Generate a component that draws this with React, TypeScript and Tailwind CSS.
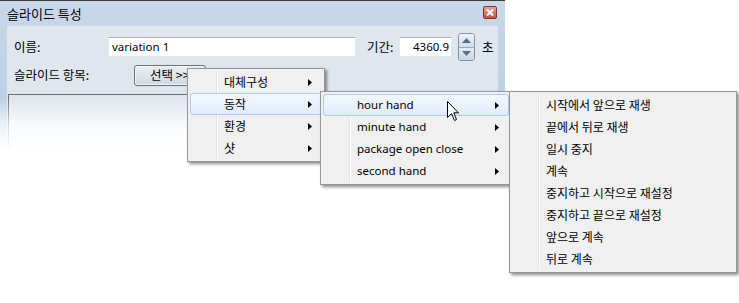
import React from 'react';

const ko = { fontFamily: '"Noto Sans CJK KR", "Noto Sans", sans-serif' };
const lat = { fontFamily: '"Noto Sans", "Noto Sans CJK KR", sans-serif' };

type Item = { label: string; sub?: boolean; active?: boolean; latin?: boolean };

function Arrow() {
  return (
    <svg width="4" height="7" viewBox="0 0 4 7" className="absolute right-[9px] top-[7px]">
      <path d="M0 0 L4 3.5 L0 7 Z" fill="#000" />
    </svg>
  );
}

function Menu({ items, className }: { items: Item[]; className: string }) {
  return (
    <div
      className={`absolute border border-[#979797] bg-[#f0f0f0] py-[2px] shadow-[2px_2px_3px_rgba(0,0,0,0.45)] ${className}`}
    >
      {/* icon column separator */}
      <div className="absolute left-[28px] top-[2px] bottom-[2px] flex">
        <div className="h-full w-px bg-[#e2e3e3]" />
        <div className="h-full w-px bg-white" />
      </div>
      {items.map((it) => (
        <div
          key={it.label}
          className={`relative mx-[2px] flex h-[22px] items-center rounded-[3px] border pl-[33px] ${
            it.active
              ? 'border-[#a8cdf3] bg-gradient-to-b from-[#f3f8fd] to-[#e1ecfa]'
              : 'border-transparent'
          }`}
        >
          <span
            className={`${it.latin ? 'text-[11.5px]' : 'text-[12px]'} leading-none text-black whitespace-nowrap`}
            style={it.latin ? lat : ko}
          >
            {it.label}
          </span>
          {it.sub && <Arrow />}
        </div>
      ))}
    </div>
  );
}

export default function App() {
  const menu1: Item[] = [
    { label: '대체구성', sub: true },
    { label: '동작', sub: true, active: true },
    { label: '환경', sub: true },
    { label: '샷', sub: true },
  ];
  const menu2: Item[] = [
    { label: 'hour hand', sub: true, active: true, latin: true },
    { label: 'minute hand', sub: true, latin: true },
    { label: 'package open close', sub: true, latin: true },
    { label: 'second hand', sub: true, latin: true },
  ];
  const menu3: Item[] = [
    { label: '시작에서 앞으로 재생' },
    { label: '끝에서 뒤로 재생' },
    { label: '일시 중지' },
    { label: '계속' },
    { label: '중지하고 시작으로 재설정' },
    { label: '중지하고 끝으로 재설정' },
    { label: '앞으로 계속' },
    { label: '뒤로 계속' },
  ];

  return (
    <div className="relative h-[303px] w-[739px] overflow-hidden bg-white">
      {/* dialog window */}
      <div className="relative h-[150px] w-[505px] overflow-hidden border-t border-[#3a3a3a] bg-gradient-to-b from-[#c9d8e8] to-[#b9cde3]">
        <div className="flex h-[25px] items-center justify-between pl-[7px] pr-[8px]">
          <span className="text-[13px] leading-none text-black" style={ko}>
            슬라이드 특성
          </span>
          <div className="mt-[-2px] flex h-[13px] w-[14px] items-center justify-center rounded-[2px] border border-[#7e3327] bg-gradient-to-b from-[#e8a597] to-[#c4513f]">
            <svg width="8" height="7" viewBox="0 0 8 7">
              <path d="M1 0.5 L7 6.5 M7 0.5 L1 6.5" stroke="#fff" strokeWidth="2" />
            </svg>
          </div>
        </div>

        <div className="mx-[7px] h-[140px] bg-[#dfe6ee] pt-[7px]">
          <div className="flex h-[28px] items-center pl-[7px]">
            <span className="w-[94px] text-[12.5px] leading-none" style={ko}>
              이름:
            </span>
            <div className="flex h-[20px] w-[248px] items-center border border-[#e3e9ef] border-t-[#abadb3] bg-white pl-[3px]">
              <span className="text-[11.5px] leading-none" style={lat}>
                variation 1
              </span>
            </div>
            <span className="ml-[11px] w-[32px] text-[12.5px] leading-none" style={ko}>
              기간:
            </span>
            <div className="flex h-[20px] w-[53px] items-center justify-end border border-[#e3e9ef] border-t-[#abadb3] bg-white pr-[2px]">
              <span className="text-[11.5px] leading-none" style={lat}>
                4360.9
              </span>
            </div>
            <div className="ml-[6px] flex h-[28px] w-[17px] flex-col overflow-hidden rounded-[3px] border border-[#8294a8]">
              <div className="flex flex-1 items-center justify-center border-b border-[#9aaabb] bg-gradient-to-b from-[#eef3f8] to-[#d3dde8]">
                <svg width="9" height="5" viewBox="0 0 9 5">
                  <path d="M0 5 L4.5 0 L9 5 Z" fill="#56708c" />
                </svg>
              </div>
              <div className="flex flex-1 items-center justify-center bg-gradient-to-b from-[#e6edf4] to-[#c9d5e2]">
                <svg width="9" height="5" viewBox="0 0 9 5">
                  <path d="M0 0 L4.5 5 L9 0 Z" fill="#56708c" />
                </svg>
              </div>
            </div>
            <span className="ml-[7px] text-[12.5px] leading-none" style={ko}>
              초
            </span>
          </div>

          <div className="mt-[4px] flex h-[21px] items-center pl-[7px]">
            <span className="w-[120px] text-[12.5px] leading-none" style={ko}>
              슬라이드 항목:
            </span>
            <div className="flex h-[21px] w-[72px] items-center rounded-[3px] border border-[#707070] bg-gradient-to-b from-[#e9eef4] to-[#cfd9e4] pl-[15px] shadow-[inset_0_0_0_1px_#f4f7fa]">
              <span className="text-[12.5px] leading-none" style={ko}>
                선택 &gt;&gt;
              </span>
            </div>
          </div>

          <div className="ml-[1px] mt-[8px] h-[60px] w-[484px] border-l border-t border-[#707070] bg-gradient-to-b from-[#dde5ed] to-[#eef2f6]" />
        </div>

        <div className="absolute bottom-0 left-0 h-[52px] w-full bg-gradient-to-b from-white/0 via-white/70 to-white" />
      </div>

      <Menu items={menu1} className="left-[187px] top-[68px] w-[138px]" />
      <Menu items={menu2} className="left-[320px] top-[91px] w-[192px]" />
      <Menu items={menu3} className="left-[509px] top-[91px] w-[228px]" />

      {/* mouse pointer */}
      <svg width="13" height="21" viewBox="0 0 13 21" className="absolute left-[447px] top-[101px]">
        <path
          d="M0.5 0.5 L0.5 16.5 L4.5 12.5 L7.5 19.5 L9.5 18.5 L6.8 11.8 L11.5 11.8 Z"
          fill="#fff"
          stroke="#000"
          strokeWidth="1"
          strokeLinejoin="round"
        />
      </svg>
    </div>
  );
}
